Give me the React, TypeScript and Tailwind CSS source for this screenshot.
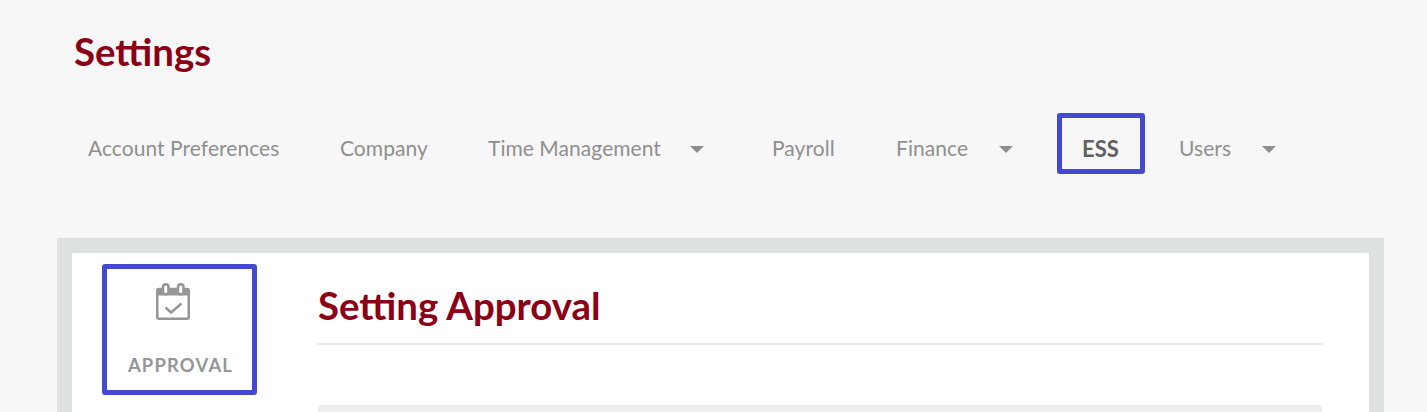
const NAV_ITEMS = [
  { label: 'Account Preferences', width: 'w-[192px]', caret: false },
  { label: 'Company', width: 'w-[88px]', caret: false },
  { label: 'Time Management', width: 'w-[171px]', caret: true },
  { label: 'Payroll', width: 'w-[64px]', caret: false },
  { label: 'Finance', width: 'w-[72px]', caret: true },
];

function Caret() {
  return <span className="ml-[31px] mr-[8px] mt-[2px] h-0 w-0 border-x-[7px] border-t-[7px] border-x-transparent border-t-[#8f8f8f]" />;
}

function CalendarIcon() {
  return (
    <svg width="34" height="37" viewBox="0 0 34 37" fill="none" className="-ml-[14px] block">
      <rect x="1.25" y="6" width="31.5" height="29.75" rx="2" fill="#fff" stroke="#969696" strokeWidth="2.5" />
      <path d="M1 5.5h32v7H1z" fill="#969696" />
      <rect x="7" y="1.25" width="5.5" height="10" rx="2.75" fill="#fff" stroke="#969696" strokeWidth="2.5" />
      <rect x="22" y="1.25" width="5.5" height="10" rx="2.75" fill="#fff" stroke="#969696" strokeWidth="2.5" />
      <path d="M9.5 24.5l5.5 5 10.5-9" stroke="#969696" strokeWidth="2.5" />
    </svg>
  );
}

export default function App() {
  return (
    <div className="h-[412px] overflow-hidden bg-[#f7f7f7] font-['Lato',sans-serif]">
      <h1 className="pl-[74px] pt-[29px] text-[38.4px] leading-[44px] font-bold text-[#8b0015]">Settings</h1>

      <nav className="mt-[40px] flex h-[61px] items-center pl-[88px] text-[21px] tracking-[0.05px] text-[#8f8f8f]">
        {NAV_ITEMS.map((item) => (
          <div key={item.label} className="mr-[60px] flex items-center whitespace-nowrap pt-[9px]">
            <span className={item.width}>{item.label}</span>
            {item.caret && <Caret />}
          </div>
        ))}
        <div className="-ml-[24px] flex h-[61px] w-[88px] items-center justify-center rounded-[3px] border-[5px] border-[#4349d0] pt-[9px] pr-[1px] text-[22px] font-bold text-[#606060]">ESS</div>
        <div className="ml-[34px] flex items-center pt-[9px]">
          <span className="w-[52px]">Users</span>
          <Caret />
        </div>
      </nav>

      <div className="ml-[57px] mr-[43px] mt-[64px] h-[300px] border-[15px] border-[#dde1e0] bg-white">
        <div className="flex">
          <div className="ml-[30px] mt-[11px] flex h-[131px] w-[155px] flex-col items-center rounded-[3px] border-[5px] border-[#4349d0] pt-[14px]">
            <CalendarIcon />
            <span className="ml-[2px] mt-[33px] text-[18.4px] leading-[24px] font-bold tracking-[1.2px] text-[#969696]">APPROVAL</span>
          </div>
          <div className="ml-[61px] w-[1004px]">
            <h2 className="mt-[29px] border-b-2 border-[#e9e9e9] pb-[14px] text-[38.4px] leading-[47px] font-bold text-[#8b0015]">Setting Approval</h2>
            <div className="mt-[60px] h-[40px] bg-[#eeeeee]" />
          </div>
        </div>
      </div>
    </div>
  );
}
